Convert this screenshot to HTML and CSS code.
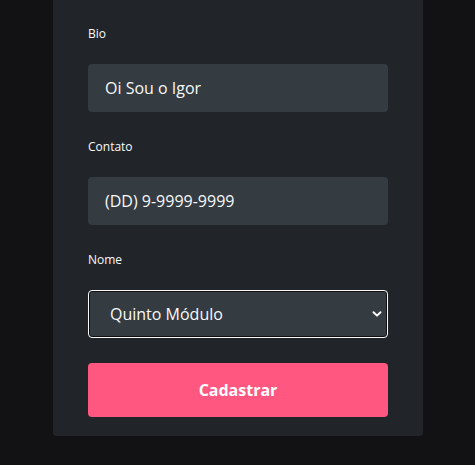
FILE: index.html
```html
<!DOCTYPE html>
<html lang="pt-BR">
<head>
<meta charset="utf-8">
<link rel="stylesheet" href="styles.css">
</head>
<body>
<main class="page">
  <form class="card">
    <div class="field">
      <label class="label">Bio</label>
      <div class="input">Oi Sou o Igor</div>
    </div>
    <div class="field">
      <label class="label">Contato</label>
      <div class="input">(DD) 9-9999-9999</div>
    </div>
    <div class="field">
      <label class="label">Nome</label>
      <div class="select">
        <span>Quinto Módulo</span>
        <svg class="chev" width="10" height="8" viewBox="0 0 10 8"><path d="M1.5 2.2 L5 5.6 L8.5 2.2" fill="none" stroke="#f8f9fa" stroke-width="2" stroke-linecap="round" stroke-linejoin="round"/></svg>
      </div>
    </div>
    <button class="btn" type="button">Cadastrar</button>
  </form>
</main>
</body>
</html>
```
FILE: styles.css
```css
* { box-sizing: border-box; }
html, body { margin: 0; padding: 0; }
body {
  background: #121214;
  font-family: "Open Sans", "Noto Sans", sans-serif;
  color: #f8f9fa;
  width: 475px;
  height: 465px;
  overflow: hidden;
}
.page {
  display: flex;
  justify-content: center;
  padding-left: 1px;
}
.card {
  width: 370px;
  margin-top: -4px;
  background: #212529;
  border-radius: 0 0 4px 4px;
  padding: 30px 35px 19px;
  display: flex;
  flex-direction: column;
  gap: 27px;
}
.field {
  display: flex;
  flex-direction: column;
  gap: 22px;
}
.label {
  font-size: 12px;
  line-height: 16px;
  height: 16px;
}
.input, .select {
  height: 48px;
  background: #343b41;
  border-radius: 4px;
  display: flex;
  align-items: center;
  font-size: 16px;
  padding: 0 16px 1px 17px;
}
.select {
  border: 1px solid #f8f9fa;
  box-shadow: inset 0 0 0 1px #101010;
  padding: 0 5px 1px 21px;
  justify-content: space-between;
}
.chev { display: block; }
.btn {
  margin-top: -2px;
  height: 54px;
  border: none;
  border-radius: 4px;
  background: #ff577f;
  color: #ffffff;
  font-family: inherit;
  font-size: 16px;
  font-weight: 700;
  padding: 0;
}
```
